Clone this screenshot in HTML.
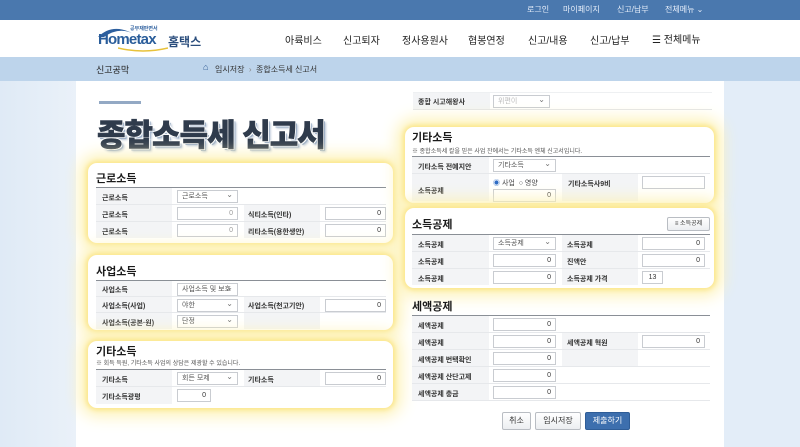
<!DOCTYPE html>
<html><head><meta charset="utf-8"><style>
*{margin:0;padding:0;box-sizing:border-box}
body{width:800px;height:447px;overflow:hidden;position:relative;background:#e3edf8;font-family:"Liberation Sans","Noto Sans CJK KR",sans-serif;color:#222}
.a{position:absolute}
.t{position:absolute;white-space:nowrap}
.panel{position:absolute;background:#fff;border-radius:9px;box-shadow:0 0 5px 2px #fbe68a,0 0 16px 8px #fdf2b6}
.h{position:absolute;font-size:11px;font-weight:bold;color:#1a1a1a}
.ln{position:absolute;height:1px;background:#8a8f96}
.row{position:absolute;border-bottom:1px solid #e6e8eb}
.lb{position:absolute;font-size:7px;font-weight:bold;color:#333;white-space:nowrap}
.lbg{position:absolute;background:#f3f4f6}
.in{position:absolute;height:13px;background:#fff;border:1px solid #c9ccd1;font-size:7px;text-align:right;padding-right:4px;line-height:11px;color:#333}
.se{position:absolute;height:13px;background:#fff;border:1px solid #c9ccd1;font-size:7px;padding-left:4px;line-height:11px;color:#555}
.se:after{content:"⌄";position:absolute;right:4px;top:-2px;font-size:8px;color:#777}
.note{position:absolute;font-size:6px;color:#555;white-space:nowrap}
.btn{position:absolute;height:18px;font-size:8px;text-align:center;line-height:16px;border:1px solid #b9bdc3;background:linear-gradient(#fff,#eceef1);border-radius:2px;color:#333}
</style></head><body>
<div class="a" style="left:0;top:0;width:800px;height:20px;background:#4a78ae"></div>
<div class="t" style="left:527px;top:4px;font-size:8px;color:#e6eefa">로그인</div>
<div class="t" style="left:563px;top:4px;font-size:8px;color:#e6eefa">마이페이지</div>
<div class="t" style="left:617px;top:4px;font-size:8px;color:#e6eefa">신고/납부</div>
<div class="t" style="left:665px;top:4px;font-size:8px;color:#e6eefa">전체메뉴 ⌄</div>
<div class="a" style="left:0;top:20px;width:800px;height:37px;background:#fff"></div>
<svg class="a" style="left:96px;top:25px" width="40" height="14"><path d="M2 12 Q16 -2 36 8 Q22 2 8 12Z" fill="#2d5f9e"/></svg>
<div class="t" style="left:130px;top:25px;font-size:5px;color:#2d5f9e;font-weight:bold">공부재판면서</div>
<div class="t" style="left:98px;top:31px;font-size:15px;font-weight:bold;color:#2a5d9a;letter-spacing:-0.8px">Hometax</div>
<div class="t" style="left:168px;top:33px;font-size:12px;font-weight:bold;color:#2a4d7c">홈택스</div>
<svg class="a" style="left:118px;top:47px" width="50" height="6"><path d="M0 1 Q25 7 50 1" stroke="#e8c23a" stroke-width="1.5" fill="none"/></svg>
<div class="t" style="left:285px;top:32px;font-size:10px;color:#222">아륙비스</div>
<div class="t" style="left:343px;top:32px;font-size:10px;color:#222">신고퇴자</div>
<div class="t" style="left:402px;top:32px;font-size:10px;color:#222">정사용원사</div>
<div class="t" style="left:468px;top:32px;font-size:10px;color:#222">협봉연정</div>
<div class="t" style="left:528px;top:32px;font-size:10px;color:#222">신고/내용</div>
<div class="t" style="left:590px;top:32px;font-size:10px;color:#222">신고/납부</div>
<div class="t" style="left:652px;top:31px;font-size:10px;color:#222">☰ 전체메뉴</div>
<div class="a" style="left:0;top:57px;width:800px;height:24px;background:#bdd4eb"></div>
<div class="t" style="left:96px;top:63px;font-size:9px;color:#222">신고공막</div>
<div class="t" style="left:203px;top:62px;font-size:9px;color:#2e5a93">⌂</div>
<div class="t" style="left:215px;top:64px;font-size:8px;color:#333">임시저장 &nbsp;<span style="color:#888">›</span>&nbsp; 종합소득세 신고서</div>
<div class="a" style="left:76px;top:81px;width:648px;height:366px;background:#fff"></div>
<div class="a" style="left:0;top:81px;width:76px;height:366px;background:linear-gradient(90deg,#dfeaf6,#eaf1f9)"></div>
<div class="a" style="left:99px;top:101px;width:42px;height:3px;background:#93a9c4"></div>
<div class="t" style="left:97px;top:110px;font-size:31px;font-weight:900;color:#2f3b4c;letter-spacing:-1px;-webkit-text-stroke:0.6px #2f3b4c;text-shadow:1px 1px 0 #fff,-1px -1px 0 #fff,1px -1px 0 #fff,-1px 1px 0 #fff,2px 2px 0 #9fb1c8,3px 3px 2px #b9c5d6">종합소득세 신고서</div>

<div class="panel" style="left:88px;top:163px;width:305px;height:80px"></div>
<div class="h" style="left:96px;top:170px">근로소득</div>
<div class="ln" style="left:96px;top:187px;width:290px"></div>
<div class="lbg" style="left:96px;top:188px;width:76px;height:50px"></div>
<div class="lbg" style="left:244px;top:205px;width:76px;height:33px"></div>
<div class="row" style="left:96px;top:188px;width:290px;height:17px"></div>
<div class="row" style="left:96px;top:205px;width:290px;height:17px"></div>
<div class="lb" style="left:102px;top:193px">근로소득</div>
<div class="se" style="left:177px;top:190px;width:61px">근로소득</div>
<div class="lb" style="left:102px;top:210px">근로소득</div>
<div class="in" style="left:177px;top:207px;width:61px;color:#999">0</div>
<div class="lb" style="left:248px;top:210px">식티소득(인타)</div>
<div class="in" style="left:325px;top:207px;width:61px">0</div>
<div class="lb" style="left:102px;top:227px">근로소득</div>
<div class="in" style="left:177px;top:224px;width:61px;color:#999">0</div>
<div class="lb" style="left:248px;top:227px">리타소득(용한생안)</div>
<div class="in" style="left:325px;top:224px;width:61px">0</div>

<div class="panel" style="left:88px;top:255px;width:305px;height:75px"></div>
<div class="h" style="left:96px;top:263px">사업소득</div>
<div class="ln" style="left:96px;top:280px;width:290px"></div>
<div class="lbg" style="left:96px;top:281px;width:76px;height:48px"></div>
<div class="lbg" style="left:244px;top:297px;width:76px;height:32px"></div>
<div class="row" style="left:96px;top:281px;width:290px;height:16px"></div>
<div class="row" style="left:96px;top:297px;width:290px;height:16px"></div>
<div class="lb" style="left:102px;top:285px">사업소득</div>
<div class="se" style="left:177px;top:283px;width:61px">사업소득 및 보호</div>
<div class="lb" style="left:102px;top:301px">사업소득(사업)</div>
<div class="se" style="left:177px;top:299px;width:61px">야한</div>
<div class="lb" style="left:248px;top:301px">사업소득(천고기안)</div>
<div class="in" style="left:325px;top:299px;width:61px">0</div>
<div class="lb" style="left:102px;top:318px">사업소득(공본·원)</div>
<div class="se" style="left:177px;top:315px;width:61px">단정</div>

<div class="panel" style="left:88px;top:341px;width:305px;height:67px"></div>
<div class="h" style="left:96px;top:343px">기타소득</div>
<div class="note" style="left:96px;top:358px">※ 회득 득원, 기타소득 사업의 상담은 제광할 수 있습니다.</div>
<div class="ln" style="left:96px;top:369px;width:290px"></div>
<div class="lbg" style="left:96px;top:370px;width:76px;height:34px"></div>
<div class="lbg" style="left:244px;top:370px;width:76px;height:17px"></div>
<div class="row" style="left:96px;top:370px;width:290px;height:17px"></div>
<div class="lb" style="left:102px;top:375px">기타소득</div>
<div class="se" style="left:177px;top:372px;width:61px">회든 모제</div>
<div class="lb" style="left:248px;top:375px">기타소득</div>
<div class="in" style="left:325px;top:372px;width:61px">0</div>
<div class="lb" style="left:102px;top:392px">기타소득광평</div>
<div class="in" style="left:177px;top:389px;width:34px">0</div>

<div class="a" style="left:413px;top:92px;width:299px;height:18px;border-bottom:1px solid #e3e5e8;border-top:1px solid #eef0f2"></div>
<div class="lbg" style="left:413px;top:93px;width:77px;height:16px"></div>
<div class="lb" style="left:418px;top:97px">종합 시고해왕사</div>
<div class="se" style="left:493px;top:95px;width:57px;color:#bbb">위편이</div>

<div class="panel" style="left:405px;top:127px;width:309px;height:76px"></div>
<div class="h" style="left:412px;top:129px">기타소득</div>
<div class="note" style="left:412px;top:146px">※ 종합소득세 칼을 믿은 사업 잔에서는 기타소득 엔체 신고서입니다.</div>
<div class="ln" style="left:412px;top:156px;width:298px"></div>
<div class="lbg" style="left:412px;top:157px;width:77px;height:44px"></div>
<div class="lbg" style="left:562px;top:174px;width:76px;height:27px"></div>
<div class="row" style="left:412px;top:157px;width:298px;height:17px"></div>
<div class="lb" style="left:418px;top:162px">기타소득 전예지안</div>
<div class="se" style="left:493px;top:159px;width:63px">기타소득</div>
<div class="lb" style="left:418px;top:186px">소득공제</div>
<div class="t" style="left:493px;top:178px;font-size:7px;color:#444"><span style="color:#2d6bc4">◉</span> 사업 &nbsp;○ 영양</div>
<div class="in" style="left:493px;top:189px;width:63px">0</div>
<div class="lb" style="left:568px;top:179px">기타소득사9비</div>
<div class="in" style="left:642px;top:176px;width:63px"></div>

<div class="panel" style="left:405px;top:208px;width:309px;height:80px"></div>
<div class="h" style="left:412px;top:216px">소득공제</div>
<div class="btn" style="left:667px;top:217px;width:43px;height:14px;line-height:12px;font-size:6px">≡ 소득공제</div>
<div class="ln" style="left:412px;top:234px;width:298px"></div>
<div class="lbg" style="left:412px;top:235px;width:77px;height:50px"></div>
<div class="lbg" style="left:562px;top:235px;width:76px;height:50px"></div>
<div class="row" style="left:412px;top:235px;width:298px;height:17px"></div>
<div class="row" style="left:412px;top:252px;width:298px;height:17px"></div>
<div class="lb" style="left:418px;top:240px">소득공제</div>
<div class="se" style="left:493px;top:237px;width:63px">소득공제</div>
<div class="lb" style="left:567px;top:240px">소득공제</div>
<div class="in" style="left:642px;top:237px;width:63px">0</div>
<div class="lb" style="left:418px;top:257px">소득공제</div>
<div class="in" style="left:493px;top:254px;width:63px">0</div>
<div class="lb" style="left:567px;top:257px">진액안</div>
<div class="in" style="left:642px;top:254px;width:63px">0</div>
<div class="lb" style="left:418px;top:274px">소득공제</div>
<div class="in" style="left:493px;top:271px;width:63px">0</div>
<div class="lb" style="left:567px;top:274px">소득공제 가격</div>
<div class="in" style="left:642px;top:271px;width:21px;text-align:center;padding:0">13</div>

<div class="h" style="left:412px;top:298px">세액공제</div>
<div class="ln" style="left:412px;top:315px;width:298px"></div>
<div class="lbg" style="left:412px;top:316px;width:77px;height:85px"></div>
<div class="lbg" style="left:562px;top:333px;width:76px;height:34px"></div>
<div class="row" style="left:412px;top:316px;width:298px;height:17px"></div>
<div class="row" style="left:412px;top:333px;width:298px;height:17px"></div>
<div class="row" style="left:412px;top:350px;width:298px;height:17px"></div>
<div class="row" style="left:412px;top:367px;width:298px;height:17px"></div>
<div class="row" style="left:412px;top:384px;width:298px;height:17px"></div>
<div class="lb" style="left:418px;top:321px">세액공제</div>
<div class="in" style="left:493px;top:318px;width:63px">0</div>
<div class="lb" style="left:418px;top:338px">세액공제</div>
<div class="in" style="left:493px;top:335px;width:63px">0</div>
<div class="lb" style="left:567px;top:338px">세액공제 혁원</div>
<div class="in" style="left:642px;top:335px;width:63px">0</div>
<div class="lb" style="left:418px;top:355px">세액공제 번택확인</div>
<div class="in" style="left:493px;top:352px;width:63px">0</div>
<div class="lb" style="left:418px;top:372px">세액공제 산단고제</div>
<div class="in" style="left:493px;top:369px;width:63px">0</div>
<div class="lb" style="left:418px;top:389px">세액공제 충금</div>
<div class="in" style="left:493px;top:386px;width:63px">0</div>

<div class="btn" style="left:502px;top:412px;width:29px">취소</div>
<div class="btn" style="left:535px;top:412px;width:46px">임시저장</div>
<div class="btn" style="left:585px;top:412px;width:45px;background:#3d6fae;border-color:#2f5d97;color:#fff">제출하기</div>
</body></html>
